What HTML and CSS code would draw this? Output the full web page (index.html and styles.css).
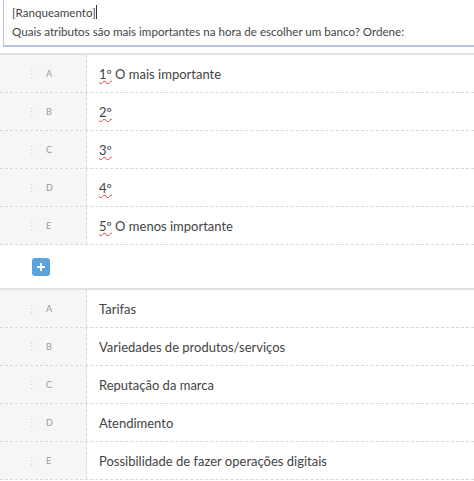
FILE: index.html
```html
<!DOCTYPE html>
<html lang="pt">
<head>
    <meta charset="UTF-8">
    <title>Ranqueamento</title>
    <link rel="stylesheet" href="styles.css">
</head>
<body>
    <div class="question">
        <p>[Ranqueamento]<span class="caret"></span></p>
        <p>Quais atributos são mais importantes na hora de escolher um banco? Ordene:</p>
    </div>

    <div class="rows">
        <div class="row">
            <div class="row-key"><span class="grip">⋮</span><span class="letter">A</span></div>
            <div class="row-text"><span class="typo">1º</span> O mais importante</div>
        </div>
        <div class="row">
            <div class="row-key"><span class="grip">⋮</span><span class="letter">B</span></div>
            <div class="row-text"><span class="typo">2º</span></div>
        </div>
        <div class="row">
            <div class="row-key"><span class="grip">⋮</span><span class="letter">C</span></div>
            <div class="row-text"><span class="typo">3º</span></div>
        </div>
        <div class="row">
            <div class="row-key"><span class="grip">⋮</span><span class="letter">D</span></div>
            <div class="row-text"><span class="typo">4º</span></div>
        </div>
        <div class="row">
            <div class="row-key"><span class="grip">⋮</span><span class="letter">E</span></div>
            <div class="row-text"><span class="typo">5º</span> O menos importante</div>
        </div>
    </div>

    <div class="add-bar">
        <button class="add-btn" type="button">
            <svg width="10" height="10" viewBox="0 0 10 10"><path d="M5 1v8M1 5h8" stroke="#fff" stroke-width="2"/></svg>
        </button>
    </div>

    <div class="rows">
        <div class="row">
            <div class="row-key"><span class="grip">⋮</span><span class="letter">A</span></div>
            <div class="row-text">Tarifas</div>
        </div>
        <div class="row">
            <div class="row-key"><span class="grip">⋮</span><span class="letter">B</span></div>
            <div class="row-text">Variedades de produtos/serviços</div>
        </div>
        <div class="row">
            <div class="row-key"><span class="grip">⋮</span><span class="letter">C</span></div>
            <div class="row-text">Reputação da marca</div>
        </div>
        <div class="row">
            <div class="row-key"><span class="grip">⋮</span><span class="letter">D</span></div>
            <div class="row-text">Atendimento</div>
        </div>
        <div class="row">
            <div class="row-key"><span class="grip">⋮</span><span class="letter">E</span></div>
            <div class="row-text">Possibilidade de fazer operações digitais</div>
        </div>
    </div>
</body>
</html>
```
FILE: styles.css
```css
body {
    margin: 0;
    font-family: Lato, 'Open Sans', sans-serif;
    font-size: 13px;
    color: #444;
    background: #fff;
    overflow: hidden;
}
.question {
    margin-left: 3px;
    height: 47px;
    padding: 3px 8px 0;
    border-left: 1px solid #b9c9e3;
    border-bottom: 2px solid #b3c6e6;
    box-sizing: border-box;
    font-size: 11.6px;
}
.question p {
    margin: 0;
    line-height: 19px;
}
.caret {
    display: inline-block;
    width: 1px;
    height: 14px;
    background: #333;
    vertical-align: -2px;
}
.rows {
    border-top: 2px solid #e2e2e2;
}
.question + .rows {
    margin-top: 6px;
}
.row {
    display: flex;
    height: 38px;
    border-bottom: 1px dashed #d8d8d8;
    box-sizing: border-box;
}
.row-key {
    width: 87px;
    flex: none;
    background: #f6f6f6;
    border-right: 1px dashed #d8d8d8;
    display: flex;
    align-items: center;
    box-sizing: border-box;
}
.grip {
    width: 8px;
    margin-left: 26px;
    color: #cfcfcf;
    font-size: 11px;
    text-align: center;
}
.letter {
    margin-left: 12px;
    color: #9a9a9a;
    font-size: 9px;
}
.row-text {
    display: flex;
    align-items: center;
    padding-left: 12px;
    white-space: pre;
}
.typo {
    text-decoration: underline wavy #e04040;
    text-decoration-thickness: 1px;
    text-underline-offset: 1px;
}
.add-bar {
    height: 43px;
    display: flex;
    align-items: center;
    padding-left: 32px;
}
.add-btn {
    width: 18px;
    height: 18px;
    padding: 0;
    border: none;
    border-radius: 3px;
    background: #5aa3dc;
    display: flex;
    align-items: center;
    justify-content: center;
}
```
